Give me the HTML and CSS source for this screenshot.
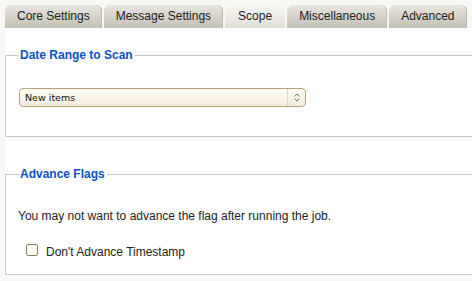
FILE: index.html
```html
<!DOCTYPE html>
<html>
<head>
<meta charset="utf-8">
<link rel="stylesheet" href="styles.css">
</head>
<body>
<div class="tabs">
  <div class="tab">Core Settings</div>
  <div class="tab">Message Settings</div>
  <div class="tab active">Scope</div>
  <div class="tab">Miscellaneous</div>
  <div class="tab">Advanced</div>
</div>
<div class="panel">
  <fieldset class="group group-date">
    <legend>Date Range to Scan</legend>
    <div class="select">
      <span class="select-value">New items</span>
      <span class="select-arrows">
        <svg width="8" height="11" viewBox="0 0 8 11"><path d="M1.5 4.5 L4 2 L6.5 4.5 M1.5 6.5 L4 9 L6.5 6.5" fill="none" stroke="#6f6f6f" stroke-width="1"/></svg>
      </span>
    </div>
  </fieldset>
  <fieldset class="group group-flags">
    <legend>Advance Flags</legend>
    <p class="note">You may not want to advance the flag after running the job.</p>
    <label class="check"><span class="box"></span><span>Don't Advance Timestamp</span></label>
  </fieldset>
</div>
</body>
</html>
```
FILE: styles.css
```css
html, body {
  margin: 0;
  padding: 0;
}
body {
  background: #f7f7f5;
  font-family: "Liberation Sans", Arial, sans-serif;
  font-size: 12px;
  color: #222;
  width: 472px;
  height: 281px;
  overflow: hidden;
}
.tabs {
  display: flex;
  gap: 2px;
  padding: 5px 0 0 5px;
  height: 23px;
}
.tab {
  height: 23px;
  line-height: 23px;
  padding: 0 12px;
  border-radius: 6px 6px 0 0;
  background: linear-gradient(#e8e6e0, #d2cfc5 60%, #c3c0b4);
  box-shadow: inset -1px 0 0 #bcb9ad;
  white-space: nowrap;
}
.tab.active {
  padding: 0 13px;
  background: linear-gradient(#f6f6f2, #e9e7e0 70%, #dedbd2);
  box-shadow: none;
}
.panel {
  margin-left: 5px;
  width: 480px;
  background: #fff;
  padding-top: 20px;
}
.group {
  margin: 0;
  border: 1px solid #c9c9c9;
  padding: 0 0 0 13px;
}
.group legend {
  padding: 0 2px 0 1px;
  color: #0a52c6;
  font-weight: bold;
  font-size: 12px;
  line-height: 14px;
}
.group-date {
  padding-top: 26px;
  padding-bottom: 29px;
}
.group-flags {
  margin-top: 30px;
  padding-top: 28px;
  padding-bottom: 15px;
}
.select {
  display: flex;
  align-items: center;
  width: 285px;
  height: 17px;
  border: 1px solid #b8a478;
  border-radius: 4px;
  background: linear-gradient(#fefcf6, #f3eddd);
  font-family: "DejaVu Sans", Verdana, sans-serif;
  font-size: 9.5px;
  color: #111;
}
.select-value {
  flex: 1;
  padding-left: 5px;
}
.select-arrows {
  width: 17px;
  height: 17px;
  border-left: 1px solid #ddd3bc;
  display: flex;
  align-items: center;
  justify-content: center;
}
.select-arrows svg {
  display: block;
}
.note {
  margin: 0 0 0 -1px;
  line-height: 14px;
}
.check {
  display: flex;
  align-items: center;
  gap: 8px;
  margin: 22px 0 0 7px;
  line-height: 14px;
}
.box {
  width: 10px;
  height: 10px;
  border: 1px solid #8e7a55;
  border-radius: 2px;
  background: #fff;
  margin-top: -4px;
}
```
